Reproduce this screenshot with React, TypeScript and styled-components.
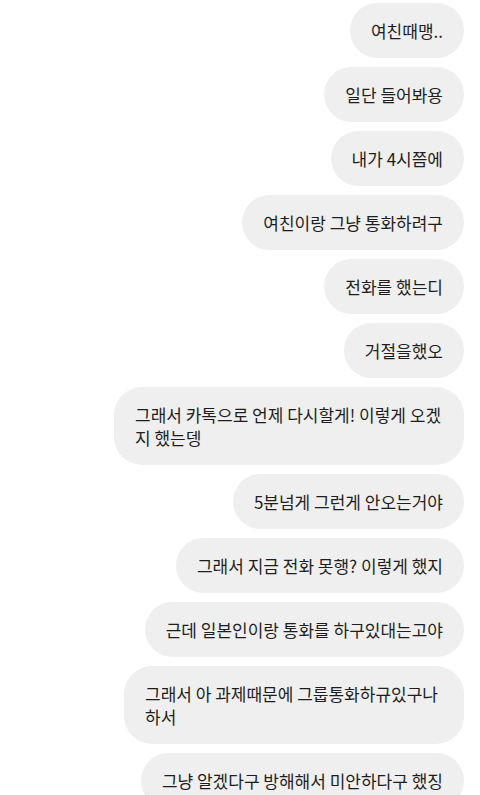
import styled, { createGlobalStyle } from "styled-components";

const GlobalStyle = createGlobalStyle`
  body {
    margin: 0;
    background-color: #ffffff;
    font-family: "Noto Sans CJK KR", "Noto Sans", sans-serif;
  }
`;

const Thread = styled.div`
  display: flex;
  flex-direction: column;
  align-items: flex-end;
  gap: 9px;
  height: 795px;
  overflow: hidden;
  padding: 3px 16px 0;
  box-sizing: border-box;
`;

const Bubble = styled.div<{ $width?: number }>`
  box-sizing: border-box;
  width: ${({ $width }) => ($width ? `${$width}px` : "auto")};
  max-width: 350px;
  padding: 16px 21px;
  border-radius: 28px;
  background-color: #efefef;
  color: #1e1e1e;
  font-size: 17px;
  line-height: 23px;
  flex-shrink: 0;
`;

const messages: [string, number?][] = [
  ["여친때맹.."],
  ["일단 들어봐용"],
  ["내가 4시쯤에"],
  ["여친이랑 그냥 통화하려구"],
  ["전화를 했는디"],
  ["거절을했오"],
  ["그래서 카톡으로 언제 다시할게! 이렇게 오겠지 했는뎅", 350],
  ["5분넘게 그런게 안오는거야"],
  ["그래서 지금 전화 못행? 이렇게 했지"],
  ["근데 일본인이랑 통화를 하구있대는고야"],
  ["그래서 아 과제때문에 그룹통화하규있구나 하서", 340],
  ["그냥 알겠다구 방해해서 미안하다구 했징"],
];

const App = () => (
  <>
    <GlobalStyle />
    <Thread>
      {messages.map(([text, width], index) => (
        <Bubble key={index} $width={width}>
          {text}
        </Bubble>
      ))}
    </Thread>
  </>
);

export default App;
